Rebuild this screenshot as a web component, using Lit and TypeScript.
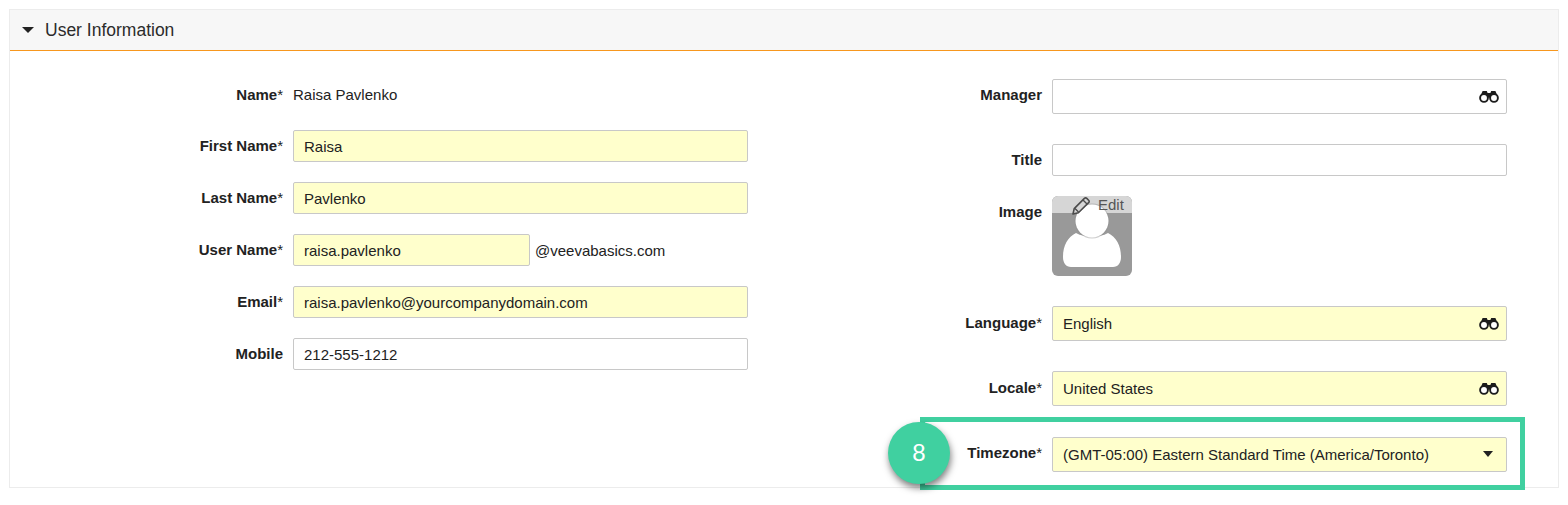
import { LitElement, html, css } from "lit";
import { customElement } from "lit/decorators.js";

const binoculars = html`<svg class="bino" viewBox="0 0 20 13" width="20" height="13" aria-hidden="true">
  <path d="M3.6 1h4.2l.8 2h2.8l.8-2h4.2l2.6 6H1z" fill="#1c1c1c"/>
  <circle cx="5" cy="8" r="3.9" fill="#fff" stroke="#1c1c1c" stroke-width="1.9"/>
  <circle cx="15" cy="8" r="3.9" fill="#fff" stroke="#1c1c1c" stroke-width="1.9"/>
  <rect x="8.2" y="3" width="3.6" height="4.6" fill="#1c1c1c"/>
</svg>`;

@customElement("app-root")
export class AppRoot extends LitElement {
  static styles = css`
    :host { display: block; width: 1568px; height: 505px; background: #fff; font-family: "Liberation Sans", Arial, sans-serif; color: #222; overflow: hidden; }
    .stage { position: relative; padding: 9px 9px 0 9px; }
    .panel { width: 1550px; height: 479px; box-sizing: border-box; border: 1px solid #ececec; }
    .head { height: 41px; box-sizing: border-box; background: #f7f7f7; border-bottom: 1px solid #f7971e; display: flex; align-items: center; gap: 11px; padding-left: 12px; font-size: 17.5px; color: #2b2b2b; }
    .caret { width: 0; height: 0; border: 6px solid transparent; border-top: 6px solid #222; border-bottom: 0; }
    .cols { display: grid; grid-template-columns: 759px 759px; padding-top: 28px; }
    .col { display: flex; flex-direction: column; }
    .left { gap: 20px; }
    .row { display: grid; align-items: start; column-gap: 10px; grid-template-columns: 273px 455px; }
    .lab { font-size: 15px; font-weight: 700; text-align: right; color: #222; line-height: 18px; white-space: nowrap; padding-top: 7px; }
    .lab i { font-style: normal; font-weight: 400; }
    .low { padding-top: 8px; }
    .val { font-size: 15px; line-height: 18px; padding: 7px 0 0 0; }
    .name { height: 31px; }
    .input { height: 32px; box-sizing: border-box; border: 1px solid #c8c8c8; border-radius: 2px; font-size: 15px; display: flex; align-items: center; padding-left: 10px; background: #fff; color: #222; position: relative; }
    .req { background: #ffffcc; }
    .user { display: flex; align-items: center; gap: 5px; font-size: 15px; }
    .user .input { width: 237px; }
    .tall { height: 35px; }
    .bino { position: absolute; right: 7px; top: 50%; margin-top: -7px; }
    .gap30 { margin-top: 30px; }
    .gap31 { margin-top: 31px; }
    .gap20 { margin-top: 20px; }
    .avatar { width: 80px; height: 80px; border-radius: 6px; background: #999; position: relative; overflow: hidden; }
    .edit { height: 17px; background: #d6d6d6; }
    .edit-text { position: absolute; left: 46px; top: 0; font-size: 15px; line-height: 18px; color: #555; }
    .pencil { position: absolute; left: 20px; top: 0; }
    .figure { position: absolute; inset: 0; filter: blur(.5px); }
    .sel::after { content: ""; position: absolute; right: 13px; top: 13px; border: 5.5px solid transparent; border-top: 6px solid #222; border-bottom: 0; }
    .hl { position: absolute; left: 920px; top: 417px; width: 605px; height: 73px; box-sizing: border-box; border: 5px solid #40d0a0; pointer-events: none; }
    .badge { position: absolute; left: 888px; top: 422px; width: 62px; height: 62px; border-radius: 50%; background: #40d0a0; color: #fff; font-size: 24px; display: flex; align-items: center; justify-content: center; box-shadow: 1px 4px 7px rgba(0,0,0,.5); }
  `;

  private field(label: string, value: string) {
    return html`<div class="row"><div class="lab">${label}<i>*</i></div><div class="input req">${value}</div></div>`;
  }

  render() {
    return html`<div class="stage">
      <div class="panel">
        <div class="head"><span class="caret"></span><span>User Information</span></div>
        <div class="cols">
          <div class="col left">
            <div class="row name"><div class="lab">Name<i>*</i></div><div class="val">Raisa Pavlenko</div></div>
            ${this.field("First Name", "Raisa")}
            ${this.field("Last Name", "Pavlenko")}
            <div class="row"><div class="lab">User Name<i>*</i></div><div class="user"><div class="input req">raisa.pavlenko</div><span>@veevabasics.com</span></div></div>
            ${this.field("Email", "raisa.pavlenko@yourcompanydomain.com")}
            <div class="row"><div class="lab">Mobile</div><div class="input">212-555-1212</div></div>
          </div>
          <div class="col right">
            <div class="row"><div class="lab">Manager</div><div class="input tall">${binoculars}</div></div>
            <div class="row gap30"><div class="lab">Title</div><div class="input"></div></div>
            <div class="row gap20"><div class="lab">Image</div>
              <div class="avatar">
                <div class="edit"></div>
                <svg class="figure" viewBox="0 0 80 80" width="80" height="80" aria-hidden="true">
                  <path d="M11 61c0-12 5-20 13-24 9 5 23 5 32 0 8 4 13 12 13 24 0 6-3 10-8 10H19c-5 0-8-4-8-10z" fill="#fff"/>
                  <circle cx="40" cy="25" r="17.5" fill="#8f8f8f" opacity=".45"/>
                  <circle cx="40" cy="25" r="16.5" fill="#fff"/>
                </svg>
                <svg class="pencil" viewBox="0 0 19 19" width="19" height="19" aria-hidden="true">
                  <path d="M2.2 12.6 12.4 2.4q1.2-1.2 2.4 0l1.8 1.8q1.2 1.2 0 2.4L6.4 16.8 1 18z" fill="#d6d6d6" stroke="#4c4c4c" stroke-width="1.6" stroke-linejoin="round"/>
                  <path d="M11 4l4 4M3 12.5l3.5 3.5" fill="none" stroke="#4c4c4c" stroke-width="1.4"/>
                </svg>
                <span class="edit-text">Edit</span>
              </div>
            </div>
            <div class="row gap30"><div class="lab low">Language<i>*</i></div><div class="input req tall">English ${binoculars}</div></div>
            <div class="row gap30"><div class="lab low">Locale<i>*</i></div><div class="input req tall">United States ${binoculars}</div></div>
            <div class="row gap31"><div class="lab">Timezone<i>*</i></div><div class="input req tall sel">(GMT-05:00) Eastern Standard Time (America/Toronto)</div></div>
          </div>
        </div>
      </div>
      <div class="hl"></div>
      <div class="badge">8</div>
    </div>`;
  }
}
